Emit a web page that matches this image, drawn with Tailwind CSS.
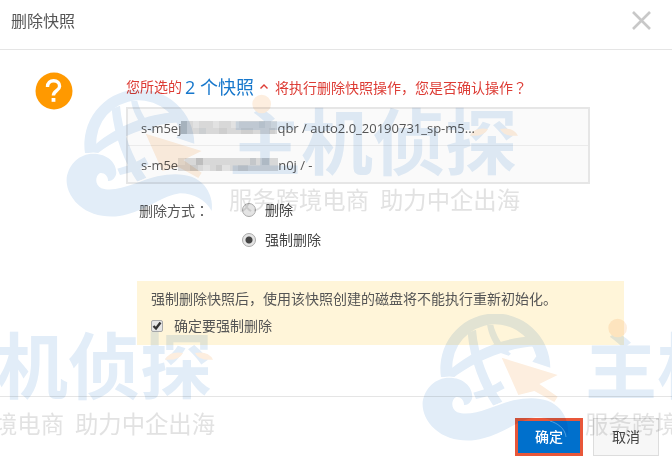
<!DOCTYPE html>
<html lang="zh-CN">

<head>
    <meta charset="UTF-8">
    <meta name="viewport" content="width=device-width, initial-scale=1.0">
    <title>删除快照</title>
    <script src="https://cdn.jsdelivr.net/npm/@tailwindcss/browser@4"></script>
</head>

<body class="bg-white">
    <div role="dialog" aria-labelledby="dialogTitle"
        class="relative flex min-h-screen flex-col overflow-hidden bg-white font-['Open_Sans','Noto_Sans_CJK_SC',sans-serif] text-sm leading-5 text-[#555]">

        <!-- Header -->
        <header class="flex h-[50px] items-center justify-between border-b border-[#e5e5e5] pr-5 pl-[11px]">
            <h1 id="dialogTitle" class="pb-2 text-base leading-6 text-[#555]">删除快照</h1>
            <button type="button" aria-label="关闭" class="mb-2 p-0">
                <svg class="size-[21px]" viewBox="0 0 21 21" fill="none" stroke="#c8c8c8" stroke-width="2.6">
                    <path d="M2 2L19 19M19 2L2 19" />
                </svg>
            </button>
        </header>

        <!-- Body -->
        <main class="flex grow pt-[22px] pr-12 pb-[50px] pl-[35px]">
            <svg class="size-[38px] shrink-0" viewBox="0 0 38 38" fill="none">
                <circle cx="19" cy="19" r="18.5" fill="#ff9900" />
                <path d="M12.5 15C12.5 10.8 15.2 8.8 18.6 8.8C22.2 8.8 24.6 11 24.6 14.2C24.6 18.6 18.4 18.8 18.4 23.6" stroke="#fff" stroke-width="3.4" />
                <rect x="16.6" y="26" width="3.8" height="3.8" fill="#fff" />
            </svg>

            <div class="min-w-0 grow pl-[53px]">
                <p class="flex h-7 items-center pt-[2px] whitespace-nowrap text-[#dd3c35]">
                    <span>您所选的</span>
                    <button type="button" class="mr-[6px] ml-[3px] flex items-center gap-[5px] text-lg text-[#1677cc]">2 个快照
                        <svg class="size-[10px]" viewBox="0 0 10 10" fill="none" stroke="#dd3c35" stroke-width="1.4">
                            <path d="M1.5 6.5L5 3L8.5 6.5" />
                        </svg>
                    </button>
                    <span>将执行删除快照操作，您是否确认操作<span lang="ja" class="font-['Noto_Sans_CJK_JP',sans-serif]">？</span></span>
                </p>

                <!-- Snapshot list -->
                <ul class="mt-[7px] mr-[34px] border-2 border-[#e6e6e6] bg-[#fafafa] text-[13px] text-[#555]">
                    <li class="flex h-[37px] items-center border-b border-[#ebebeb] pt-px pl-[13px] whitespace-pre">s-m5ej<svg class="h-4 w-[96px] shrink-0" viewBox="0 0 96 16">
                            <path fill="#d8d8d8" d="M0 1H96V14H0Z" />
                            <path fill="#bcc0c3" d="M0 1H6V14H0Z" />
                            <path fill="#cccfd1" d="M78 1H84V8H78ZM18 8H25V14H18Z" />
                            <path fill="#cecece" d="M38 8H46V14H38ZM60 8H72V14H60ZM88 8H94V14H88Z" />
                            <path fill="#e2e2e2" d="M12 1H18V8H12ZM32 1H38V8H32ZM50 1H58V8H50ZM90 1H96V8H90Z" />
                        </svg>qbr / auto2.0_20190731_sp-m5...</li>
                    <li class="flex h-[36px] items-center pt-px pl-[13px] whitespace-pre">s-m5e<svg class="h-4 w-[100px] shrink-0" viewBox="0 0 100 16">
                            <path fill="#d8d8d8" d="M0 1H100V14H0Z" />
                            <path fill="#bebebe" d="M18 1H25V8H18Z" />
                            <path fill="#c4c7ca" d="M72 1H78V8H72ZM84 1H91V8H84Z" />
                            <path fill="#cccccc" d="M12 8H20V14H12ZM38 8H44V14H38ZM60 8H70V14H60Z" />
                            <path fill="#e2e2e2" d="M0 1H7V8H0ZM44 8H52V14H44ZM25 8H32V14H25Z" />
                        </svg>n0j / -</li>
                </ul>

                <!-- Delete mode -->
                <fieldset class="mt-4 flex pl-[13px]">
                    <legend class="float-left w-[103px]">删除方式<span lang="ja" class="font-['Noto_Sans_CJK_JP',sans-serif]">：</span></legend>
                    <div class="flex flex-col gap-[10px] text-[#444]">
                        <label class="flex items-center gap-[9px]">
                            <input type="radio" name="mode" value="normal"
                                class="size-[14px] appearance-none rounded-full border border-[#aaa] bg-[#e4e4e4] checked:bg-[radial-gradient(circle,#444_3px,#e4e4e4_4px)]">删除
                        </label>
                        <label class="flex items-center gap-[9px]">
                            <input type="radio" name="mode" value="force" checked
                                class="size-[14px] appearance-none rounded-full border border-[#aaa] bg-[#e4e4e4] checked:bg-[radial-gradient(circle,#444_3px,#e4e4e4_4px)]">强制删除
                        </label>
                    </div>
                </fieldset>

                <!-- Warning -->
                <div class="mt-[31px] ml-[11px] flex flex-col gap-[7px] bg-[#fff5d9] px-[14px] pt-[8px] pb-[9px]">
                    <p class="whitespace-nowrap">强制删除快照后，使用该快照创建的磁盘将不能执行重新初始化。</p>
                    <label class="flex items-center gap-[11px]">
                        <span class="grid size-[12px] place-items-center">
                            <input type="checkbox" checked
                                class="peer col-start-1 row-start-1 size-[12px] appearance-none rounded-xs border border-[#aaa] bg-[#e6e6e6]">
                            <svg class="invisible col-start-1 row-start-1 size-[10px] peer-checked:visible" viewBox="0 0 10 10" fill="none" stroke="#333" stroke-width="2.4">
                                <path d="M1.5 5L4 7.5L8.5 1.5" />
                            </svg>
                        </span>确定要强制删除
                    </label>
                </div>
            </div>
        </main>

        <!-- Footer -->
        <footer class="flex justify-end gap-[10px] border-t border-[#e5e5e5] pt-[21px] pr-[13px] pb-[13px]">
            <button type="button" class="relative h-[38px] w-[68px] border-3 border-[#e8573a] bg-[#0070cc] font-medium text-white">确定
                <svg class="absolute top-0 right-0 h-[20px] w-[30px]" viewBox="0 0 30 20" fill="none" stroke="#fff" stroke-opacity="0.3">
                    <path d="M0 0C7 2 15 7 16 16" />
                </svg>
            </button>
            <button type="button" class="h-[38px] w-[66px] border border-[#ddd] bg-[#f7f7f7] text-[#444]">取消</button>
        </footer>

        <!-- Watermark -->
        <div aria-hidden="true" class="pointer-events-none absolute inset-0 overflow-hidden mix-blend-multiply">
            <svg class="absolute top-[90px] left-[66px] h-[130px] w-[460px]" viewBox="48 15 1380 390">
                <g id="mark">
                    <g transform="translate(12 -12)" fill="#e2edf8">
                        <path d="M93 216A165 165 0 1 1 421 188L367 170L379 154A127 127 0 0 0 131 218Z" />
                        <path d="M173 84L198 74C204 150 235 230 277 290L250 302C212 245 180 165 173 84Z" />
                        <path d="M231 58L250 60C258 90 275 122 303 146L296 152L270 143C252 120 236 92 231 58Z" />
                        <path d="M125 222C190 170 290 128 378 124L365 94C280 98 190 135 122 192Z" />
                        <path d="M190 263Q240 250 272 228L284 250Q240 275 198 282Z" />
                        <path fill="#fdeedf" d="M275 158L443 210L388 237L443 275L433 291L373 258L325 270Z" />
                        <path stroke="#fff" stroke-width="7" paint-order="stroke" d="M118 218C160 218 188 245 187 277C184 293 172 302 162 300C163 284 150 274 138 276C122 286 123 312 142 322C190 338 260 297 310 286C370 273 420 279 450 312C469 335 477 363 473 390C455 357 420 337 378 337C330 342 280 385 220 400C170 415 110 405 75 373C45 345 36 315 38 290C45 250 75 218 118 218Z" />
                    </g>
                    <g font-family="'Noto Sans CJK SC', sans-serif">
                        <text x="537" y="251" font-size="216" font-weight="700" fill="#e2edf8">主机侦探</text>
                        <text x="537" y="373" font-size="70" fill="#e2e2e2">服务跨境电商</text>
                        <text x="990" y="373" font-size="70" fill="#e2e2e2">助力中企出海</text>
                    </g>
                    <g fill="#fdeedf">
                        <circle cx="635" cy="57" r="28" />
                        <path d="M1260 152Q1274 125 1314 132Q1302 156 1260 152Z" />
                        <path d="M1404 152Q1390 125 1350 132Q1362 156 1404 152Z" />
                    </g>
                </g>
            </svg>
            <svg class="absolute top-[314px] left-[422px] h-[130px] w-[460px]" viewBox="48 15 1380 390">
                <use href="#mark" />
            </svg>
            <svg class="absolute top-[314px] -left-[239px] h-[130px] w-[460px]" viewBox="48 15 1380 390">
                <use href="#mark" />
            </svg>
        </div>
    </div>
</body>

</html>
